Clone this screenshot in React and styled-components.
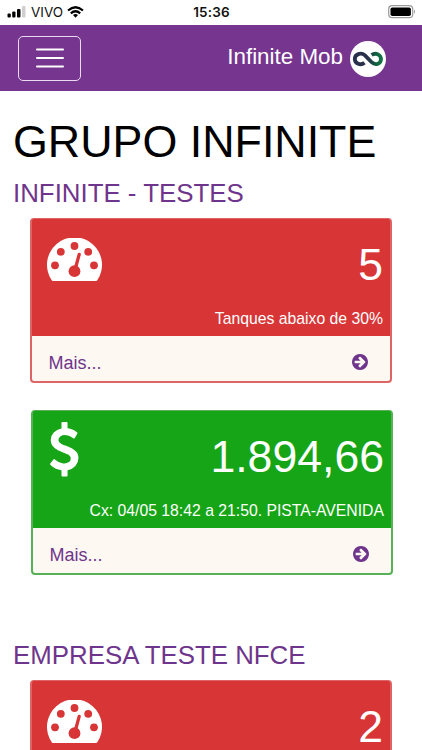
import React from "react";
import styled, { createGlobalStyle } from "styled-components";

const GlobalStyle = createGlobalStyle`
  * { box-sizing: border-box; }
  html, body { margin: 0; height: 750px; overflow: hidden; background: #fff; }
  body { font-family: "Liberation Sans", Arial, sans-serif; }
  svg { display: block; flex: none; }
`;

const Screen = styled.div`
  width: 422px;
  height: 750px;
  overflow: hidden;
  background: #fff;
`;

const StatusBar = styled.div`
  height: 25px;
  display: grid;
  grid-template-columns: 1fr auto 1fr;
  align-items: center;
  padding: 0 6px 1px 7px;
  font-family: Inter, sans-serif;
  color: #111;
`;

const Signal = styled.div`
  display: flex;
  align-items: center;
`;

const Carrier = styled.span`
  font-size: 13.5px;
  line-height: 16px;
  margin: 0 4px 0 5px;
`;

const Clock = styled.span`
  font-size: 13.5px;
  line-height: 16px;
  font-weight: 600;
  letter-spacing: 0.2px;
`;

const Battery = styled.div`
  justify-self: end;
`;

const NavBar = styled.nav`
  height: 66px;
  background: #76358f;
  display: flex;
  align-items: center;
  justify-content: space-between;
  padding: 0 36px 0 18px;
`;

const MenuButton = styled.button`
  width: 63px;
  height: 45px;
  padding: 0;
  border: 1px solid #eadcf0;
  border-radius: 5px;
  background: transparent;
  display: flex;
  align-items: center;
  justify-content: center;
`;

const Brand = styled.div`
  display: flex;
  align-items: center;
  gap: 7px;
  padding-top: 1px;
  color: #fff;
  font-size: 22.4px;
  line-height: 28px;
  white-space: nowrap;
`;

const BrandName = styled.span`
  margin-top: -3px;
`;

const Main = styled.main`
  padding: 0 13px;
`;

const Title = styled.h1`
  margin: 0;
  height: 74px;
  padding-top: 25px;
  font-size: 44.8px;
  line-height: 50px;
  font-weight: 400;
  color: #000;
  white-space: nowrap;
`;

const Company = styled.section`
  height: 462px;
`;

const CompanyName = styled.h2`
  margin: 0;
  height: 53px;
  padding-top: 13px;
  font-size: 25.85px;
  line-height: 30px;
  font-weight: 400;
  color: #6f358c;
  white-space: nowrap;
`;

const CardList = styled.div`
  display: flex;
  flex-direction: column;
  gap: 27px;
`;

const Card = styled.article`
  width: 362px;
  height: 165px;
  flex: none;
  margin-left: ${(p) => (p.$tone === "green" ? 18 : 17)}px;
  border: 2px solid ${(p) => (p.$tone === "green" ? "#58b158" : "#df6465")};
  border-top: 1px solid ${(p) => (p.$tone === "green" ? "#58b158" : "#df6465")};
  border-radius: 4px;
  background: ${(p) => (p.$tone === "green" ? "#16a516" : "#d83536")};
  overflow: hidden;
`;

const CardHead = styled.div`
  height: 117px;
  padding: 0 7px 0 15px;
  display: grid;
  grid-template-columns: 56px 1fr;
  grid-template-rows: 91px 26px;
  color: #fff;
`;

const CardIcon = styled.div`
  padding-top: ${(p) => (p.$kind === "money" ? 11 : 19)}px;
  padding-left: ${(p) => (p.$kind === "money" ? 2 : 0)}px;
`;

const Amount = styled.div`
  padding-top: 21px;
  font-size: 44.6px;
  line-height: 50px;
  text-align: right;
`;

const Caption = styled.div`
  grid-column: 1 / -1;
  font-size: 15.76px;
  line-height: 18px;
  text-align: right;
  white-space: nowrap;
`;

const CardFoot = styled.a`
  height: 45px;
  padding: 7px 22px 0 16.5px;
  background: #fdf8f1;
  color: #6f358c;
  display: flex;
  align-items: center;
  justify-content: space-between;
  font-size: 18px;
  line-height: 22px;
`;

const More = styled.span`
  padding-top: 1px;
`;

const SignalBars = () => (
  <svg width="19" height="12" viewBox="0 0 19 12">
    <rect x="0.5" y="7.5" width="3.3" height="4" rx="1" fill="#000" />
    <rect x="5.2" y="5.5" width="3.3" height="6" rx="1" fill="#000" />
    <rect x="10" y="3" width="3.5" height="8.5" rx="1" fill="#000" />
    <rect x="15" y="0" width="3.5" height="11.5" rx="1" fill="#cfcfcf" />
  </svg>
);

const Wifi = () => (
  <svg width="17" height="12" viewBox="0 0 17 12" fill="none" stroke="#000" strokeWidth="2.2">
    <path d="M1 4.5Q8.5-2 16 4.5" />
    <path d="M3.8 7.3Q8.5 3.2 13.2 7.3" />
    <path d="M6 9Q8.5 7 11 9L8.5 11.7Z" fill="#000" stroke="none" />
  </svg>
);

const BatteryIcon = () => (
  <svg width="28" height="14" viewBox="0 0 28 14">
    <rect x="0.7" y="0.7" width="24" height="12" rx="3.5" fill="none" stroke="#9b9b9b" strokeWidth="1.2" />
    <rect x="2.5" y="2.4" width="20.4" height="8.7" rx="1.8" fill="#000" />
    <path d="M26 4.5Q28 6.7 26 9Z" fill="#9b9b9b" />
  </svg>
);

const MenuIcon = () => (
  <svg width="28" height="20" viewBox="0 0 28 20" stroke="#fff" strokeWidth="2" strokeLinecap="round">
    <path d="M1 1.5H27M1 10H27M1 18.5H27" />
  </svg>
);

const Logo = () => (
  <svg width="36" height="36" viewBox="0 0 36 36">
    <defs>
      <linearGradient id="loop" gradientUnits="userSpaceOnUse" x1="3" y1="0" x2="33" y2="0">
        <stop offset="0.5" stopColor="#28304b" />
        <stop offset="0.78" stopColor="#10643f" />
        <stop offset="1" stopColor="#15764a" />
      </linearGradient>
    </defs>
    <circle cx="18" cy="18" r="18" fill="#fff" />
    <path
      d="M14.5 21.8C10.5 25 4.8 22.4 4.8 18S10.6 10.6 15 14.4L21.6 21.2C25.8 25 31 22.4 31 18.2S26 11 21.6 14"
      fill="none"
      stroke="url(#loop)"
      strokeWidth="3.8"
    />
  </svg>
);

const Gauge = () => (
  <svg width="55" height="43" viewBox="0 0 55 43">
    <path d="M5.8 43Q5.1 43 4.7 42.2A27.5 27.5 0 1 1 50.3 42.2Q49.9 43 49.2 43Z" fill="#fff" />
    <g fill="#d83536">
      <circle cx="8" cy="27.3" r="3.9" />
      <circle cx="13.8" cy="13.8" r="3.9" />
      <circle cx="27.5" cy="8" r="3.9" />
      <circle cx="41.2" cy="13.8" r="3.9" />
      <circle cx="47" cy="27.3" r="3.9" />
      <circle cx="27.5" cy="33.2" r="5.9" />
    </g>
    <path d="M28.5 30L32.2 16.4" stroke="#d83536" strokeWidth="3.3" strokeLinecap="round" />
  </svg>
);

const Dollar = () => (
  <svg width="28.5" height="54.5" viewBox="429 0 933 1792" fill="#fff">
    <path d="M1362 1185q0 153-99.5 263.5t-258.5 136.5v175q0 14-9 23t-23 9h-135q-13 0-22.5-9.5t-9.5-22.5v-175q-66-9-127.5-31t-101.5-44.5-74-48-46.5-37.5-17.5-18q-17-21-2-41l103-135q7-10 23-12 15-2 24 9l2 2q113 99 243 125 37 8 74 8 81 0 142.5-43t61.5-122q0-28-15-53t-33.5-42-58.5-37.5-66-32-80-32.5q-39-16-61.5-25t-61.5-26.5-62.5-31-56.5-35.5-53.5-42.5-43.5-49-35.5-58-21-66.5-8.5-78q0-138 98-242t255-134v-180q0-13 9.5-22.5t22.5-9.5h135q14 0 23 9t9 23v176q57 6 110.5 23t87 33.5 63.5 37.5 39 29 15 14q17 18 5 38l-81 146q-8 15-23 16-14 3-27-7-3-3-14.5-12t-39-26.5-58.5-32-74.5-26-85.5-11.5q-95 0-155 43t-60 111q0 26 8.5 48t29.5 41.5 39.5 33 56 31 60.5 27 70 27.5q53 20 81 31.5t76 35 75.5 42.5 62 50 53 63.5 31.5 76.5 13 94z" />
  </svg>
);

const ArrowCircle = () => (
  <svg width="16" height="16" viewBox="128 128 1536 1536" fill="#6f358c">
    <path d="M1413 896q0-27-18-45l-91-91-362-362q-18-18-45-18t-45 18l-91 91q-18 18-18 45t18 45l189 189h-502q-26 0-45 19t-19 45v128q0 26 19 45t45 19h502l-189 189q-18 18-18 45t18 45l91 91q18 18 45 18t45-18l362-362 91-91q18-18 18-45zm251 0q0 209-103 385.5t-279.5 279.5-385.5 103-385.5-103-279.5-279.5-103-385.5 103-385.5 279.5-279.5 385.5-103 385.5 103 279.5 279.5 103 385.5z" />
  </svg>
);

const companies = [
  {
    name: "INFINITE - TESTES",
    cards: [
      { tone: "red", kind: "gauge", amount: "5", caption: "Tanques abaixo de 30%" },
      { tone: "green", kind: "money", amount: "1.894,66", caption: "Cx: 04/05 18:42 a 21:50. PISTA-AVENIDA" },
    ],
  },
  {
    name: "EMPRESA TESTE NFCE",
    cards: [{ tone: "red", kind: "gauge", amount: "2", caption: "Tanques abaixo de 30%" }],
  },
];

export default function App() {
  return (
    <Screen>
      <GlobalStyle />
      <StatusBar>
        <Signal>
          <SignalBars />
          <Carrier>VIVO</Carrier>
          <Wifi />
        </Signal>
        <Clock>15:36</Clock>
        <Battery>
          <BatteryIcon />
        </Battery>
      </StatusBar>
      <NavBar>
        <MenuButton aria-label="Menu">
          <MenuIcon />
        </MenuButton>
        <Brand>
          <BrandName>Infinite Mob</BrandName>
          <Logo />
        </Brand>
      </NavBar>
      <Main>
        <Title>GRUPO INFINITE</Title>
        {companies.map((company) => (
          <Company key={company.name}>
            <CompanyName>{company.name}</CompanyName>
            <CardList>
              {company.cards.map((card) => (
                <Card key={card.kind} $tone={card.tone}>
                  <CardHead>
                    <CardIcon $kind={card.kind}>{card.kind === "money" ? <Dollar /> : <Gauge />}</CardIcon>
                    <Amount>{card.amount}</Amount>
                    <Caption>{card.caption}</Caption>
                  </CardHead>
                  <CardFoot>
                    <More>Mais...</More>
                    <ArrowCircle />
                  </CardFoot>
                </Card>
              ))}
            </CardList>
          </Company>
        ))}
      </Main>
    </Screen>
  );
}
